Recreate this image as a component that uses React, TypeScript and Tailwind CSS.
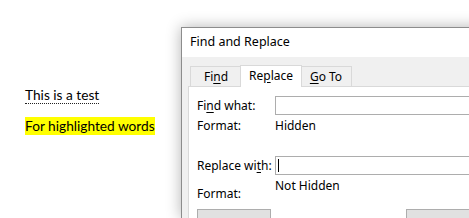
import React from 'react';

const ui = { fontFamily: '"Noto Sans", "Open Sans", sans-serif' };
const doc = { fontFamily: 'Lato, "Noto Sans", sans-serif' };

const U: React.FC<{ children: React.ReactNode }> = ({ children }) => <span className="underline underline-offset-2">{children}</span>;

const App: React.FC = () => {
  return (
    <div className="w-[469px] h-[218px] overflow-hidden bg-white flex">
      {/* Document */}
      <div className="w-[181px] shrink-0 pl-[25px] pt-[86px] text-[13.7px] text-black" style={doc}>
        <div className="flex">
          <span className="leading-[17px] border-b border-dotted border-[#222]">This is a test</span>
        </div>
        <div className="flex mt-[13px]">
          <span className="bg-[#ffff00] leading-[18px]">For highlighted words</span>
        </div>
      </div>

      {/* Dialog */}
      <div className="mt-[27px] w-[320px] shrink-0 border-l border-t border-[#8c8c8c] bg-[#f0f0f0] shadow-[0_0_14px_rgba(0,0,0,0.3)] text-[12px] text-black" style={ui}>
        <div className="h-[29px] bg-white flex items-center pl-[8px] text-[12.5px]">Find and Replace</div>

        <div className="pl-[6px]">
          {/* Tabs */}
          <div className="flex items-end h-[29px] pl-[2px]">
            <div className="w-[52px] h-[20px] border border-b-0 border-[#d9d9d9] bg-[#f0f0f0] flex items-center justify-center -mr-[2px]">
              Fi<U>n</U>d
            </div>
            <div className="relative z-10 w-[62px] h-[22px] border border-b-0 border-[#d9d9d9] bg-white flex items-center justify-center -mb-px pb-[1px]">
              Re<U>p</U>lace
            </div>
            <div className="w-[52px] h-[20px] border border-b-0 border-[#d9d9d9] bg-[#f0f0f0] flex items-center justify-center -ml-[2px]">
              <U>G</U>o To
            </div>
          </div>

          {/* Panel */}
          <div className="bg-white border border-[#d9d9d9] h-[140px] pl-[8px] pt-[9px]">
            <div className="flex items-center h-[19px]">
              <span className="w-[78px]">Fi<U>n</U>d what:</span>
              <div className="flex-1 h-[19px] border border-[#adadad] bg-white" />
            </div>
            <div className="flex items-center h-[16px] mt-[3px]">
              <span className="w-[78px]">Format:</span>
              <span>Hidden</span>
            </div>
            <div className="flex items-center h-[19px] mt-[22px]">
              <span className="w-[78px]">Replace wi<U>t</U>h:</span>
              <div className="flex-1 h-[19px] border border-[#adadad] bg-white flex items-center pl-[2px]">
                <div className="w-px h-[13px] bg-black" />
              </div>
            </div>
            <div className="flex h-[26px] mt-[2px]">
              <span className="w-[78px] self-end">Format:</span>
              <span className="self-start">Not Hidden</span>
            </div>
            <div className="flex mt-[6px]">
              <div className="w-[74px] h-[22px] border border-[#adadad] bg-[#e1e1e1]" />
              <div className="w-[135px]" />
              <div className="w-[74px] h-[22px] border border-[#adadad] bg-[#e1e1e1]" />
            </div>
          </div>
        </div>
      </div>
    </div>
  );
};

export default App;
